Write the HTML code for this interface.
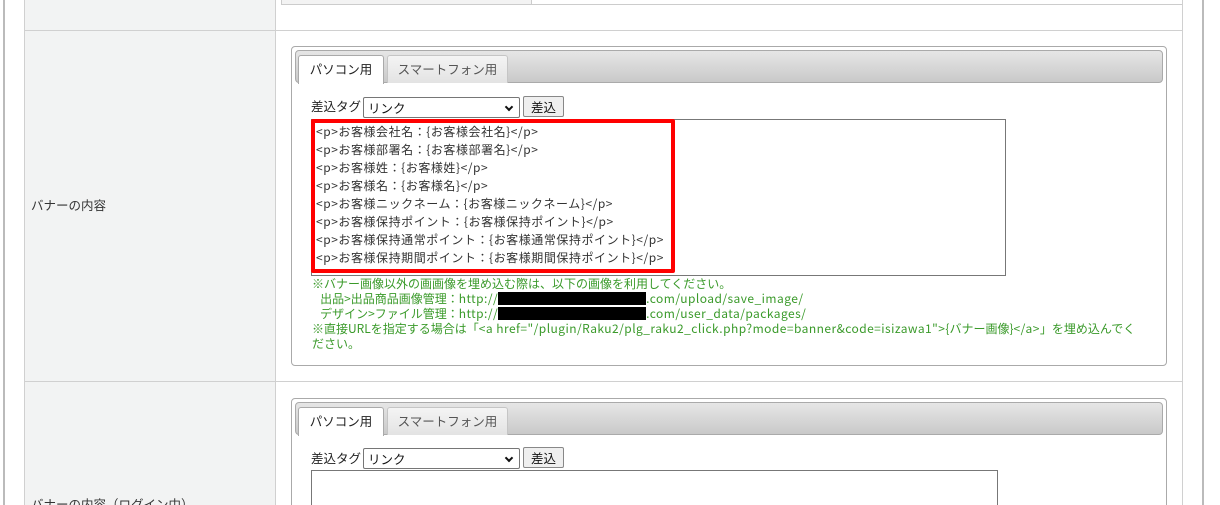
<!DOCTYPE html>
<html><head><meta charset="utf-8"><style>
*{box-sizing:border-box;margin:0;padding:0}
html,body{width:1220px;height:505px;overflow:hidden}
body{background:#fff;font-family:"Noto Sans CJK JP","Liberation Sans",sans-serif;font-size:12px;color:#333;position:relative}
.a{position:absolute}
.lab{background:#f2f3f3}
.panel{position:absolute;left:291px;width:876px;border:1px solid #aaa;border-radius:4px;background:#fff}
.bar{position:absolute;left:3px;right:3px;top:3px;height:33px;border:1px solid #aaa;border-radius:4px;background:linear-gradient(#e6e6e6,#c9c9c9)}
.tab{position:absolute;top:8px;height:28px;border:1px solid #c5c5c5;border-bottom:none;border-radius:3px 3px 0 0;background:linear-gradient(#f4f4f4,#e3e3e3);color:#555;font-size:12.5px;line-height:26px;text-align:center}
.tab.on{background:#fff;border-color:#aaa;color:#222;height:29px}
.sel{position:absolute;height:21px;border:1px solid #767676;border-radius:2px;background:#fff;font-size:12.5px;line-height:19px;padding-left:4px;color:#111}
.btn{position:absolute;height:21px;width:41px;border:1px solid #888;border-radius:2px;background:#efefef;font-size:12.5px;line-height:19px;text-align:center;color:#111}
.ta{position:absolute;border:1px solid #777;background:#fff}
.g{color:#3a9a2a;font-size:12px;line-height:15px;white-space:nowrap}
.l{letter-spacing:0.45px}
.chev{position:absolute;right:7px;top:6px;width:6px;height:6px;border-right:2px solid #111;border-bottom:2px solid #111;transform:rotate(45deg)}
</style></head><body>
<div class="a" style="left:3px;top:0;width:2px;height:505px;background:#bbb"></div>
<div class="a" style="left:1202px;top:0;width:2px;height:505px;background:#bbb"></div>
<div class="a lab" style="left:24px;top:0;width:251px;height:505px"></div>
<div class="a" style="left:24px;top:0;height:505px;border-left:1px solid #d0d0d0"></div>
<div class="a" style="left:275px;top:0;height:505px;border-left:1px solid #d0d0d0"></div>
<div class="a" style="left:1182px;top:0;height:505px;border-left:1px solid #d0d0d0"></div>
<div class="a" style="left:24px;top:30px;width:1158px;border-top:1px solid #d0d0d0"></div>
<div class="a" style="left:24px;top:381px;width:1158px;border-top:1px solid #d0d0d0"></div>
<div class="a" style="left:281px;top:-2px;width:251px;height:7px;border:1px solid #ccc;background:#f3f3f3"></div>
<div class="a" style="left:532px;top:4px;width:650px;border-top:1px solid #ccc"></div>

<div class="a" style="left:31px;top:196px;font-size:12.5px;line-height:18px;color:#333">バナーの内容</div>
<div class="a" style="left:31px;top:495px;font-size:12.5px;line-height:18px;color:#333">バナーの内容（ログイン中）</div>

<div class="panel" style="top:46px;height:320px">
 <div class="bar"></div>
 <div class="tab on" style="left:6px;width:86px">パソコン用</div>
 <div class="tab" style="left:95px;width:121px">スマートフォン用</div>
 <div class="a" style="left:19px;top:50px;font-size:12.5px;line-height:18px;color:#222">差込タグ</div>
 <div class="sel" style="left:71px;top:50px;width:157px">リンク<span class="chev"></span></div>
 <div class="btn" style="left:231px;top:49px">差込</div>
 <div class="ta" style="left:19px;top:72px;width:695px;height:157px"></div>
 <div class="a" style="left:19px;top:72px;width:364px;height:154px;border:4px solid #f00;border-radius:2px;padding:0 0 0 1px;font-size:12px;line-height:18px;color:#333;white-space:nowrap;letter-spacing:0.55px">
&lt;p&gt;お客様会社名：{お客様会社名}&lt;/p&gt;<br>&lt;p&gt;お客様部署名：{お客様部署名}&lt;/p&gt;<br>&lt;p&gt;お客様姓：{お客様姓}&lt;/p&gt;<br>&lt;p&gt;お客様名：{お客様名}&lt;/p&gt;<br>&lt;p&gt;お客様ニックネーム：{お客様ニックネーム}&lt;/p&gt;<br>&lt;p&gt;お客様保持ポイント：{お客様保持ポイント}&lt;/p&gt;<br>&lt;p&gt;お客様保持通常ポイント：{お客様通常保持ポイント}&lt;/p&gt;<br>&lt;p&gt;お客様保持期間ポイント：{お客様期間保持ポイント}&lt;/p&gt;</div>
 <div class="a g" style="left:20px;top:229px;width:840px">※バナー画像以外の画画像を埋め込む際は、以下の画像を利用してください。<br>
 &nbsp;&nbsp;&nbsp;出品&gt;出品商品画像管理：<span class="l">http://</span><span style="display:inline-block;width:148px;height:13px;background:#000;vertical-align:-2px"></span><span class="l">.com/upload/save_image/</span><br>
 &nbsp;&nbsp;&nbsp;デザイン&gt;ファイル管理：<span class="l">http://</span><span style="display:inline-block;width:148px;height:13px;background:#000;vertical-align:-2px"></span><span class="l">.com/user_data/packages/</span><br>
 ※直接URLを指定する場合は「<span class="l">&lt;a href="/plugin/Raku2/plg_raku2_click.php?mode=banner&amp;code=isizawa1"&gt;</span>{バナー画像}<span class="l">&lt;/a&gt;</span>」を埋め込んでく<br>ださい。</div>
</div>

<div class="panel" style="top:398px;height:120px">
 <div class="bar"></div>
 <div class="tab on" style="left:6px;width:86px">パソコン用</div>
 <div class="tab" style="left:95px;width:121px">スマートフォン用</div>
 <div class="a" style="left:19px;top:50px;font-size:12.5px;line-height:18px;color:#222">差込タグ</div>
 <div class="sel" style="left:71px;top:49px;width:157px">リンク<span class="chev"></span></div>
 <div class="btn" style="left:231px;top:48px">差込</div>
 <div class="ta" style="left:19px;top:71px;width:687px;height:60px"></div>
</div>
</body></html>
